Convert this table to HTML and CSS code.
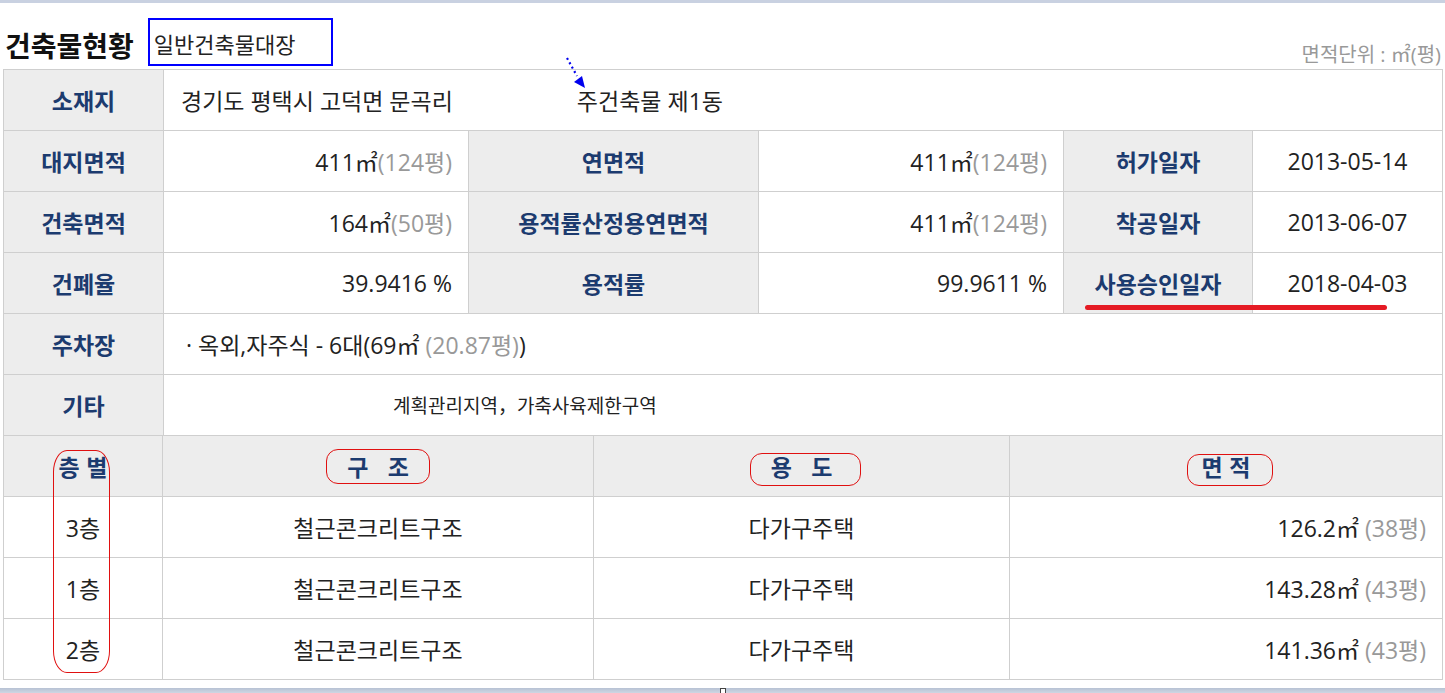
FILE: index.html
```html
<!DOCTYPE html>
<html lang="ko">
<head>
  <meta charset="UTF-8" />
  <title>건축물현황</title>
  <link rel="stylesheet" href="styles.css">
</head>
<body>
  <div class="topbar"></div>

  <div class="sheet">
    <div class="head">
      <h2 class="title">건축물현황</h2>
      <div class="kind">일반건축물대장</div>
      <div class="unit">면적단위 : ㎡(평)</div>
    </div>

    <table class="info">
      <colgroup>
        <col class="w160"><col class="w305"><col class="w290"><col class="w305"><col class="w189"><col class="w190">
      </colgroup>
      <tr>
        <th>소재지</th>
        <td colspan="5" class="addr">경기도 평택시 고덕면 문곡리<span class="dong">주건축물 제1동</span></td>
      </tr>
      <tr>
        <th>대지면적</th>
        <td class="num">411㎡<span class="py">(124평)</span></td>
        <th>연면적</th>
        <td class="num">411㎡<span class="py">(124평)</span></td>
        <th>허가일자</th>
        <td class="date">2013-05-14</td>
      </tr>
      <tr>
        <th>건축면적</th>
        <td class="num">164㎡<span class="py">(50평)</span></td>
        <th>용적률산정용연면적</th>
        <td class="num">411㎡<span class="py">(124평)</span></td>
        <th>착공일자</th>
        <td class="date">2013-06-07</td>
      </tr>
      <tr>
        <th>건폐율</th>
        <td class="num">39.9416 %</td>
        <th>용적률</th>
        <td class="num">99.9611 %</td>
        <th>사용승인일자</th>
        <td class="date">2018-04-03</td>
      </tr>
      <tr>
        <th>주차장</th>
        <td colspan="5" class="park">· 옥외,자주식 - 6대(69㎡ <span class="py">(20.87평)</span>)</td>
      </tr>
      <tr>
        <th>기타</th>
        <td colspan="5" class="etc">계획관리지역，가축사육제한구역</td>
      </tr>
    </table>

    <table class="floors">
      <colgroup>
        <col class="w159"><col class="w431"><col class="w416"><col class="w433">
      </colgroup>
      <tr>
        <th>층 별</th>
        <th>구&nbsp;&nbsp;&nbsp;조</th>
        <th>용&nbsp;&nbsp;&nbsp;도</th>
        <th>면 적</th>
      </tr>
      <tr>
        <td>3층</td>
        <td>철근콘크리트구조</td>
        <td>다가구주택</td>
        <td class="num">126.2㎡ <span class="py">(38평)</span></td>
      </tr>
      <tr>
        <td>1층</td>
        <td>철근콘크리트구조</td>
        <td>다가구주택</td>
        <td class="num">143.28㎡ <span class="py">(43평)</span></td>
      </tr>
      <tr>
        <td>2층</td>
        <td>철근콘크리트구조</td>
        <td>다가구주택</td>
        <td class="num">141.36㎡ <span class="py">(43평)</span></td>
      </tr>
    </table>

    <!-- annotations drawn over the table -->
    <svg class="arrow" width="30" height="40" viewBox="0 0 30 40">
      <line x1="7" y1="6" x2="17" y2="24" stroke="#0000ee" stroke-width="2.2" stroke-dasharray="2 3"/>
      <polygon points="14,30 22,24 25,36" fill="#0000ee"/>
    </svg>
    <div class="underline"></div>
    <div class="mark mark-floor"></div>
    <div class="mark mark-struct"></div>
    <div class="mark mark-use"></div>
    <div class="mark mark-area"></div>
  </div>

  <div class="bottombar"><span class="grip"></span></div>
</body>
</html>
```

FILE: styles.css
```css
body {
  margin: 0;
  background: #fff;
  font-family: "Open Sans", "Noto Sans CJK KR", sans-serif;
  color: #222;
}
.topbar {
  height: 3px;
  background: #c9d1e1;
}
.sheet {
  position: relative;
  padding: 0 3px;
}
.head {
  height: 66px;
  display: flex;
  align-items: flex-end;
  padding: 0 1px 3px 2px;
  box-sizing: border-box;
}
.title {
  margin: 0 0 4px 0;
  font-family: "Noto Sans CJK KR", sans-serif;
  font-size: 28px;
  line-height: 34px;
  font-weight: bold;
  color: #111;
}
.kind {
  margin-left: 14px;
  width: 185px;
  height: 48px;
  box-sizing: border-box;
  border: 2px solid #0000ff;
  padding: 8px 0 0 4px;
  font-family: "Noto Sans CJK KR", sans-serif;
  font-size: 22px;
  line-height: 30px;
  color: #222;
}
.unit {
  margin-left: auto;
  margin-bottom: -1px;
  font-size: 20px;
  line-height: 24px;
  color: #999;
}
table {
  width: 1439px;
  border-collapse: collapse;
  table-layout: fixed;
}
th, td {
  border: 1px solid #cfcfcf;
  height: 60px;
  padding: 0 16px;
  font-size: 23px;
  white-space: nowrap;
}
th {
  background: #ededed;
  color: #1c3b6f;
  font-family: "Noto Sans CJK KR", sans-serif;
  font-size: 23px;
  font-weight: bold;
  text-align: center;
}
td {
  background: #fff;
}
.w160 { width: 160px; }
.w305 { width: 305px; }
.w290 { width: 290px; }
.w189 { width: 189px; }
.w190 { width: 190px; }
.w159 { width: 159px; }
.w431 { width: 431px; }
.w416 { width: 416px; }
.w433 { width: 433px; }
.num {
  text-align: right;
}
.date {
  text-align: center;
}
.py {
  color: #999;
}
.addr {
  padding-left: 17px;
}
.dong {
  margin-left: 124px;
}
.park {
  padding-left: 22px;
}
.etc {
  padding-left: 229px;
  font-size: 19px;
}
.floors th, .floors td {
  text-align: center;
}
.floors td.num {
  text-align: right;
}
.floors tr:first-child th {
  border-top: none;
}
.arrow {
  position: absolute;
  left: 560px;
  top: 49px;
}
.underline {
  position: absolute;
  left: 1085px;
  top: 302px;
  width: 302px;
  height: 5px;
  border-radius: 3px;
  background: #e51b24;
}
.mark {
  position: absolute;
  border: 1px solid #e01010;
  box-sizing: border-box;
}
.mark-floor {
  left: 53px;
  top: 447px;
  width: 57px;
  height: 223px;
  border-radius: 14px / 22px;
}
.mark-struct {
  left: 326px;
  top: 446px;
  width: 104px;
  height: 35px;
  border-radius: 12px;
}
.mark-use {
  left: 750px;
  top: 450px;
  width: 111px;
  height: 33px;
  border-radius: 12px;
}
.mark-area {
  left: 1187px;
  top: 451px;
  width: 86px;
  height: 32px;
  border-radius: 12px;
}
.bottombar {
  margin-top: 8px;
  height: 6px;
  background: linear-gradient(#b7c2d4, #d3dae6);
  text-align: center;
}
.grip {
  display: inline-block;
  width: 4px;
  height: 4px;
  border: 1px solid #444;
  background: #fff;
  vertical-align: top;
}
```
